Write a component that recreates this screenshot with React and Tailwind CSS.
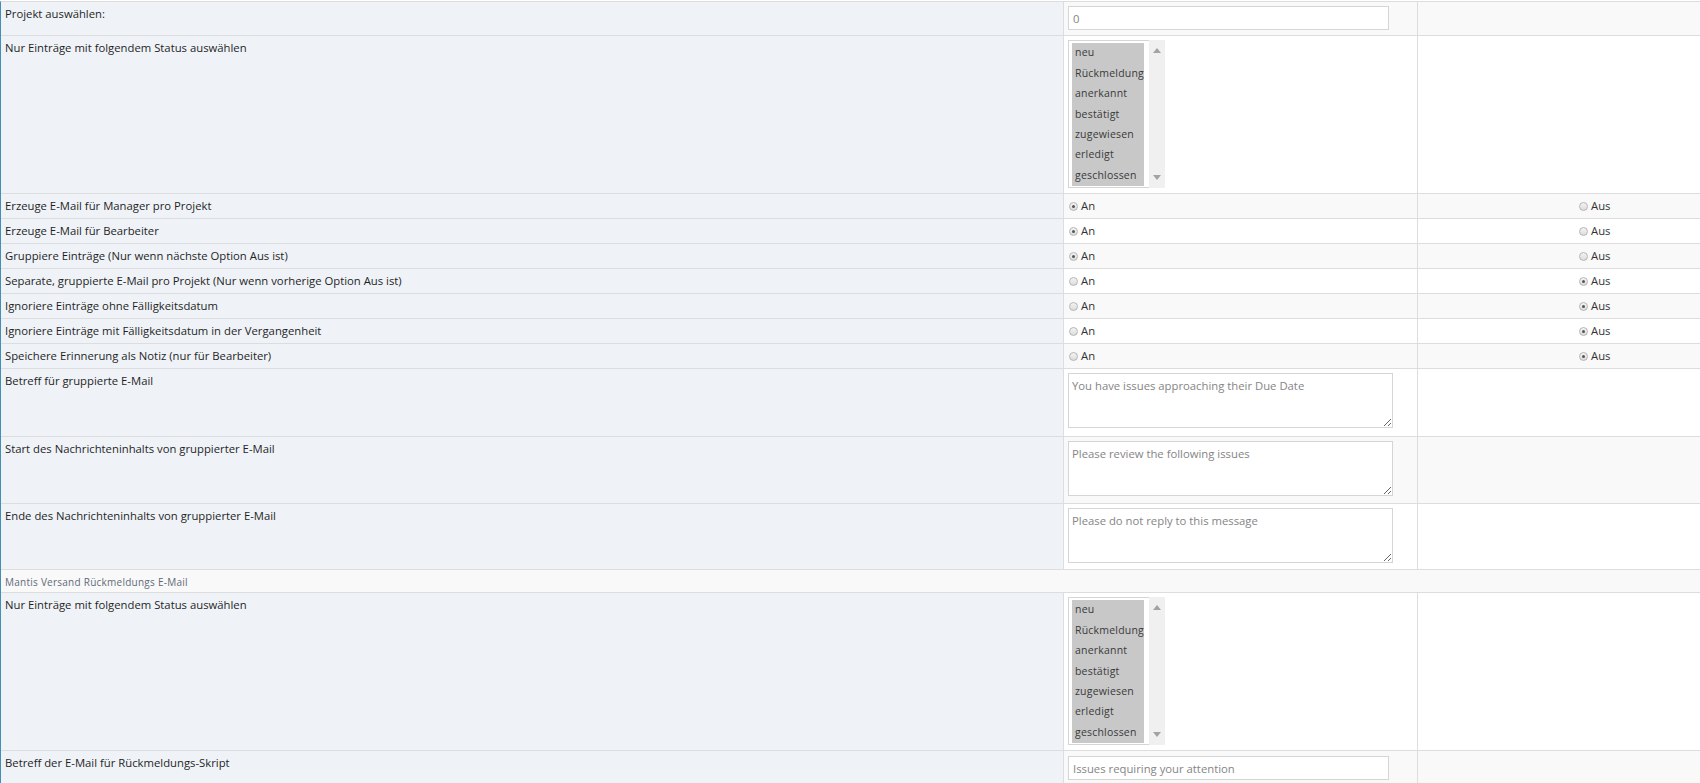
import React from "react";

const FONT = { fontFamily: '"Open Sans", "Noto Sans", sans-serif' };

const STATUSES = ["neu", "Rückmeldung", "anerkannt", "bestätigt", "zugewiesen", "erledigt", "geschlossen"];

const TOGGLES = [
  ["Erzeuge E-Mail für Manager pro Projekt", true],
  ["Erzeuge E-Mail für Bearbeiter", true],
  ["Gruppiere Einträge (Nur wenn nächste Option Aus ist)", true],
  ["Separate, gruppierte E-Mail pro Projekt (Nur wenn vorherige Option Aus ist)", false],
  ["Ignoriere Einträge ohne Fälligkeitsdatum", false],
  ["Ignoriere Einträge mit Fälligkeitsdatum in der Vergangenheit", false],
  ["Speichere Erinnerung als Notiz (nur für Bearbeiter)", false],
];

function Row({ label, h, striped, children, third }) {
  const bg = striped ? "bg-[#f9f9f9]" : "bg-white";
  return (
    <div className={`grid grid-cols-[1063px_354px_1fr] border-b border-[#dddddd] ${h}`}>
      <div className="bg-[#eff3f8] border-r border-[#dddddd] px-[4px] pt-[4px] text-[11.3px] leading-[16px] text-[#1f1f1f]">
        {label}
      </div>
      <div className={`${bg} border-r border-[#dddddd] px-[4px] pt-[4px]`}>{children}</div>
      <div className={`${bg}`}>{third}</div>
    </div>
  );
}

function Radio({ checked, label }) {
  return (
    <label className="flex items-center h-[16px] text-[11.3px] text-[#333333]">
      <span className="ml-[1px] w-[9px] h-[9px] rounded-full border border-[#b5b5b5] bg-gradient-to-b from-[#f4f4f4] to-[#dcdcdc] flex items-center justify-center">
        {checked && <span className="w-[3px] h-[3px] rounded-full bg-[#555555]" />}
      </span>
      <span className="ml-[3px]">{label}</span>
    </label>
  );
}

function StatusSelect() {
  return (
    <div className="flex w-[97px] h-[148px] border border-[#d5d5d5] bg-white">
      <div className="flex-1 pl-[3px] pt-[2px] pr-[4px]">
        <div className="flex flex-col h-[143px] w-[72px] bg-[#c8c8c8]">
          {STATUSES.map((s) => (
            <div key={s} className="flex-1 flex items-center pl-[3px] text-[10.5px] text-[#3a3a3a] tracking-[0.2px]">
              {s}
            </div>
          ))}
        </div>
      </div>
      <div className="w-[16px] -my-px -mr-px bg-[#f0f0f0] flex flex-col items-center justify-between py-[8px]">
        <svg width="8" height="5" viewBox="0 0 8 5"><path d="M0 5 L4 0 L8 5 Z" fill="#a3a3a3" /></svg>
        <svg width="8" height="5" viewBox="0 0 8 5"><path d="M0 0 L4 5 L8 0 Z" fill="#a3a3a3" /></svg>
      </div>
    </div>
  );
}

function TextInput({ value }) {
  return (
    <input
      readOnly
      defaultValue={value}
      className="block w-[321px] h-[24px] border border-[#d5d5d5] bg-white px-[4px] text-[11.3px] text-[#858585] outline-none"
      style={FONT}
    />
  );
}

function TextBox({ value }) {
  return (
    <textarea
      readOnly
      defaultValue={value}
      className="block w-[325px] h-[55px] border border-[#d5d5d5] bg-white px-[3px] py-[4px] text-[11.3px] leading-[16px] text-[#858585] outline-none"
      style={FONT}
    />
  );
}

export default function App() {
  return (
    <div className="w-[1700px] h-[783px] overflow-hidden bg-white" style={FONT}>
      <div className="mt-[1px] border-t border-l border-t-[#dddddd] border-l-[#438eb9]">
        <Row label="Projekt auswählen:" h="h-[34px]" striped>
          <TextInput value="0" />
        </Row>
        <Row label="Nur Einträge mit folgendem Status auswählen" h="h-[158px]">
          <StatusSelect />
        </Row>
        {TOGGLES.map(([label, on], i) => (
          <Row
            key={label}
            label={label}
            h="h-[25px]"
            striped={i % 2 === 0}
            third={
              <div className="pl-[160px] pt-[4px]">
                <Radio checked={!on} label="Aus" />
              </div>
            }
          >
            <Radio checked={on} label="An" />
          </Row>
        ))}
        <Row label="Betreff für gruppierte E-Mail" h="h-[68px]">
          <TextBox value="You have issues approaching their Due Date" />
        </Row>
        <Row label="Start des Nachrichteninhalts von gruppierter E-Mail" h="h-[67px]" striped>
          <TextBox value="Please review the following issues" />
        </Row>
        <Row label="Ende des Nachrichteninhalts von gruppierter E-Mail" h="h-[66px]">
          <TextBox value="Please do not reply to this message" />
        </Row>
        <div className="h-[23px] border-b border-[#dddddd] bg-[#f9f9f9] px-[4px] pt-[4px] text-[10px] leading-[16px] tracking-[0.25px] text-[#5f6b78]">
          Mantis Versand Rückmeldungs E-Mail
        </div>
        <Row label="Nur Einträge mit folgendem Status auswählen" h="h-[158px]">
          <StatusSelect />
        </Row>
        <Row label="Betreff der E-Mail für Rückmeldungs-Skript" h="h-[40px]" striped>
          <div className="pt-[1px]">
            <TextInput value="Issues requiring your attention" />
          </div>
        </Row>
      </div>
    </div>
  );
}
